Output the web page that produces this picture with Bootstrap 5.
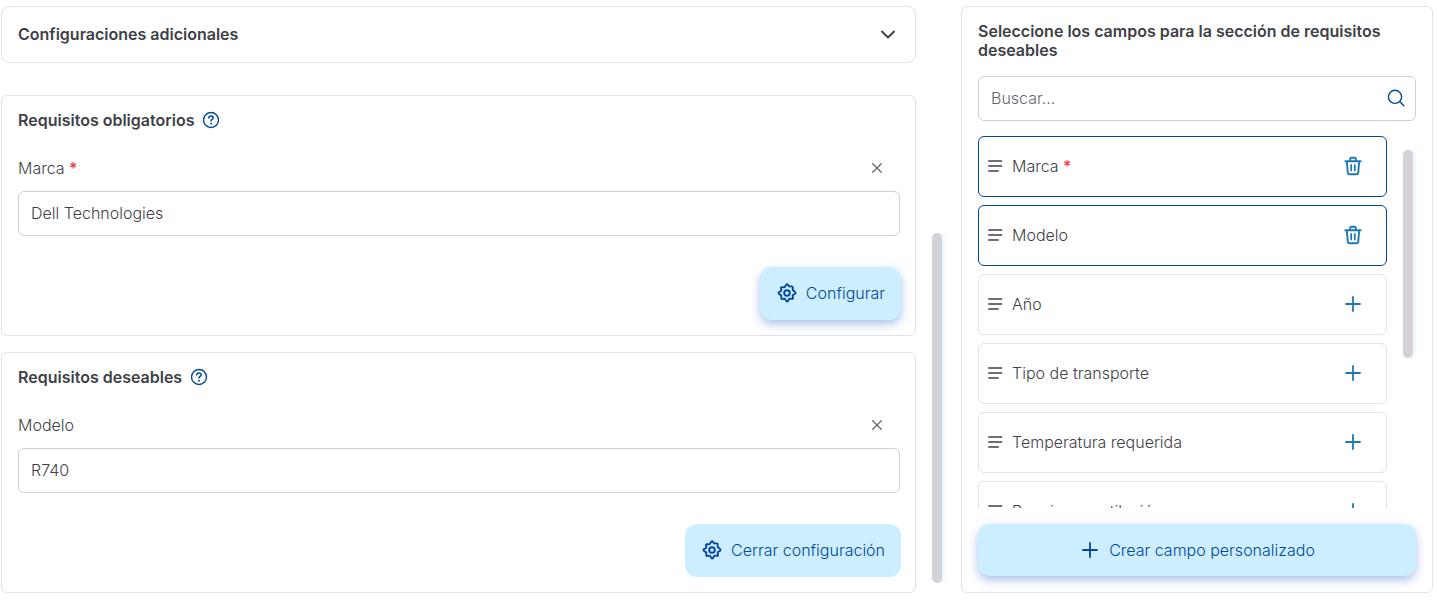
<!DOCTYPE html>
<html lang="es">
<head>
<meta charset="utf-8">
<meta name="viewport" content="width=device-width, initial-scale=1">
<title>Requisitos</title>
<link href="https://cdn.jsdelivr.net/npm/bootstrap@5.3.0/dist/css/bootstrap.min.css" rel="stylesheet">
<style>
  :root { --ink: #3f3f47; --navy: #00479d; --sky: #cdeeff; --line: #e3e3e6; }
  body { font-family: Inter, "Liberation Sans", sans-serif; font-size: 16px; font-weight: 300; line-height: 24px; color: var(--ink); background: #fff; }
  svg { display: block; flex: none; fill: none; stroke: currentColor; stroke-linecap: round; stroke-linejoin: round; }
  .layout { padding: 6px 4px 8px 1px; }
  .side { width: 32.96%; }
  .panel { background: #fff; border: 1px solid var(--line); border-radius: 6px; }
  .req { padding: 12px 15px 15px 16px; }
  .title { font-size: 16px; line-height: 24px; font-weight: 600; margin: 0; }
  .side .title { line-height: 19px; }
  .side .panel { padding: 15px 16px 16px; }
  .toggle { padding: 15px 15px 17px 16px; height: 57px; margin-bottom: 32px; border-radius: 8px; color: var(--ink); text-align: left; }
  .plain { background: none; border: 0; padding: 0; }
  .help { color: var(--navy); }
  .field { height: 45px; border: 1px solid #d0d0d3; border-radius: 6px; padding: 0 12px 2px; font-size: 16px; font-weight: 300; color: var(--ink); }
  .field::placeholder { color: #66666e; opacity: 1; }
  .label-row { margin: 24px 0 11px; }
  .close-x { margin-right: 15px; color: #686872; }
  .star { color: #ee3a3a; font-weight: 500; }
  .action { background: var(--sky); color: var(--navy); border: 0; border-radius: 12px; height: 53px; padding: 0 16px 1px; font-weight: 300; }
  .side .action { height: 52px; }
  .raised { box-shadow: 0 4px 10px rgba(40, 95, 200, .38); }
  .req-foot { margin-top: 31px; margin-right: -1px; }
  .thumb { width: 13px; border-radius: 6px; background: #eff7ff; }
  .thumb::before { content: ""; display: block; width: 10px; height: 100%; border-radius: 5px; background: #d2d2d7; }
  .page-thumb { margin: 227px 16px 10px; }
  .list-thumb { height: 208px; margin: 14px 0 0 16px; }
  .picker { height: 372px; margin: 15px 0 16px; }
  .option { flex: none; height: 61px; border: 1px solid var(--line); border-radius: 6px; padding: 0 23px 2px 8px; gap: 9px; }
  .option.chosen { border-color: var(--navy); }
  .option button { color: #1f78b4; }
  .lens { right: 11px; top: 13px; color: var(--navy); }
</style>
</head>
<body>
<svg width="0" height="0" class="position-absolute" aria-hidden="true">
  <symbol id="gear" viewBox="0 0 20 20"><path stroke-width="1.9" d="M10 1.3c1 0 1.3 1.7 2.3 2.1s2.4-.5 3.2.2-.2 2.2.2 3.2 2.9 1.700 2.900 3.200-2.500 1.300-2.900 2.300.9 2.400.2 3.200-2.200-.2-3.200.2-1.700 2.900-2.700 2.900-1.300-2.500-2.300-2.900-2.400.9-3.200.2.2-2.200-.2-3.200-2.900-1.300-2.900-2.700 2.500-1.300 2.900-2.300-.9-2.400-.2-3.200 2.200.2 3.200-.2S9 1.300 10 1.300Z"/><circle cx="10" cy="10" r="2.8" stroke-width="1.9"/></symbol>
  <symbol id="help" viewBox="0 0 18 18"><circle cx="9" cy="9" r="7.5" stroke-width="1.4"/><path stroke-width="1.5" d="M6.8 7.1C6.8 5.7 7.7 4.9 9 4.9s2.200.8 2.200 2c0 1.500-2.200 1.600-2.200 3.100"/><circle cx="9" cy="12.7" r=".6" stroke-width=".8" fill="currentColor"/></symbol>
  <symbol id="cross" viewBox="0 0 16 16"><path stroke-width="1.3" d="m3.700 3.700 8.600 8.600m0-8.600-8.600 8.600"/></symbol>
  <symbol id="bars" viewBox="0 0 16 16"><path stroke-width="1.6" d="M1.800 3h12.800M1.800 8h12.800M1.800 13h9.400"/></symbol>
  <symbol id="trash" viewBox="0 0 20 20"><path stroke-width="1.9" d="M2.300 5.300h15.400M3.800 5.500l1 11.300c.1.900.6 1.400 1.500 1.400h7.400c.9 0 1.400-.5 1.500-1.400l1-11.300M7.200 5V2.800c0-.7.4-1.100 1.100-1.100h3.400c.7 0 1.100.4 1.100 1.100V5"/><path stroke-width="1.700" d="M8.200 8.800v5.800M11.800 8.800v5.800"/></symbol>
  <symbol id="plus" viewBox="0 0 20 20"><path stroke-width="1.8" d="M10 3v14M3 10h14"/></symbol>
</svg>

<div class="layout d-flex">
  <main class="flex-grow-1">
    <button type="button" class="panel toggle w-100 d-flex align-items-center justify-content-between">
      <span class="title">Configuraciones adicionales</span>
      <svg class="me-1" width="16" height="16" viewBox="0 0 16 16" stroke-width="1.9"><path d="m2 5.500 6 6 6-6"/></svg>
    </button>

    <section class="panel req mb-3">
      <div class="d-flex align-items-center gap-2">
        <h2 class="title">Requisitos obligatorios</h2>
        <button type="button" class="plain help" aria-label="Ayuda"><svg width="18" height="18"><use href="#help"/></svg></button>
      </div>
      <div class="label-row d-flex align-items-center justify-content-between">
        <label for="marca">Marca <span class="star">*</span></label>
        <button type="button" class="plain close-x" aria-label="Quitar Marca"><svg width="16" height="16"><use href="#cross"/></svg></button>
      </div>
      <input id="marca" type="text" class="field w-100 d-block" value="Dell Technologies">
      <div class="req-foot d-flex justify-content-end">
        <button type="button" class="action raised d-flex align-items-center gap-2"><svg width="22" height="20"><use href="#gear"/></svg>Configurar</button>
      </div>
    </section>

    <section class="panel req">
      <div class="d-flex align-items-center gap-2">
        <h2 class="title">Requisitos deseables</h2>
        <button type="button" class="plain help" aria-label="Ayuda"><svg width="18" height="18"><use href="#help"/></svg></button>
      </div>
      <div class="label-row d-flex align-items-center justify-content-between">
        <label for="modelo">Modelo</label>
        <button type="button" class="plain close-x" aria-label="Quitar Modelo"><svg width="16" height="16"><use href="#cross"/></svg></button>
      </div>
      <input id="modelo" type="text" class="field w-100 d-block" value="R740">
      <div class="req-foot d-flex justify-content-end">
        <button type="button" class="action d-flex align-items-center gap-2"><svg width="22" height="20"><use href="#gear"/></svg>Cerrar configuración</button>
      </div>
    </section>
  </main>

  <div class="thumb page-thumb flex-shrink-0"></div>

  <aside class="side flex-shrink-0">
    <div class="panel">
      <h2 class="title">Seleccione los campos para la sección de requisitos deseables</h2>
      <div class="position-relative mt-3">
        <input type="text" class="field w-100 d-block" placeholder="Buscar..." aria-label="Buscar">
        <svg class="lens position-absolute" width="18" height="18" viewBox="0 0 18 18" stroke-width="1.4"><circle cx="8" cy="7.800" r="6.600"/><path d="m12.900 12.700 4 4"/></svg>
      </div>
      <div class="picker d-flex overflow-hidden">
        <div class="flex-grow-1 d-flex flex-column gap-2">
          <div class="option chosen d-flex align-items-center"><svg width="16" height="16"><use href="#bars"/></svg><span class="flex-grow-1">Marca <span class="star">*</span></span><button type="button" class="plain" aria-label="Eliminar Marca"><svg width="20" height="20"><use href="#trash"/></svg></button></div>
          <div class="option chosen d-flex align-items-center"><svg width="16" height="16"><use href="#bars"/></svg><span class="flex-grow-1">Modelo</span><button type="button" class="plain" aria-label="Eliminar Modelo"><svg width="20" height="20"><use href="#trash"/></svg></button></div>
          <div class="option d-flex align-items-center"><svg width="16" height="16"><use href="#bars"/></svg><span class="flex-grow-1">Año</span><button type="button" class="plain" aria-label="Añadir Año"><svg width="20" height="20"><use href="#plus"/></svg></button></div>
          <div class="option d-flex align-items-center"><svg width="16" height="16"><use href="#bars"/></svg><span class="flex-grow-1">Tipo de transporte</span><button type="button" class="plain" aria-label="Añadir Tipo de transporte"><svg width="20" height="20"><use href="#plus"/></svg></button></div>
          <div class="option d-flex align-items-center"><svg width="16" height="16"><use href="#bars"/></svg><span class="flex-grow-1">Temperatura requerida</span><button type="button" class="plain" aria-label="Añadir Temperatura requerida"><svg width="20" height="20"><use href="#plus"/></svg></button></div>
          <div class="option d-flex align-items-center"><svg width="16" height="16"><use href="#bars"/></svg><span class="flex-grow-1">Requiere ventilación</span><button type="button" class="plain" aria-label="Añadir Requiere ventilación"><svg width="20" height="20"><use href="#plus"/></svg></button></div>
        </div>
        <div class="thumb list-thumb flex-shrink-0"></div>
      </div>
      <button type="button" class="action raised w-100 d-flex align-items-center justify-content-center gap-2"><svg width="22" height="20"><use href="#plus"/></svg>Crear campo personalizado</button>
    </div>
  </aside>
</div>
<script src="https://cdn.jsdelivr.net/npm/bootstrap@5.3.0/dist/js/bootstrap.bundle.min.js"></script>
</body>
</html>
